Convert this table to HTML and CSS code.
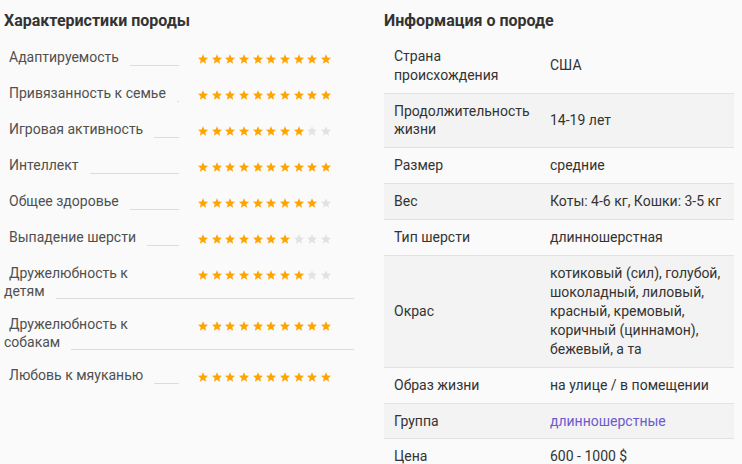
FILE: index.html
```html
<!DOCTYPE html>
<html lang="ru">
<head>
<meta charset="utf-8">
<title>Порода</title>
<link rel="stylesheet" href="styles.css">
</head>
<body>
<svg class="defs" width="0" height="0" aria-hidden="true">
  <symbol id="star" viewBox="2 2 20 19.4">
    <polygon points="12,2 14.9,8.6 22,9.3 16.6,14 18.2,21 12,17.3 5.8,21 7.4,14 2,9.3 9.1,8.6"/>
  </symbol>
</svg>
<div class="page">
  <section class="col">
    <h2 class="title">Характеристики породы</h2>
    <div class="traits">
      <div class="trait">
        <div class="label"><span class="name">Адаптируемость</span><i class="leader"></i></div>
        <div class="stars" data-v="10"></div>
      </div>
      <div class="trait">
        <div class="label"><span class="name">Привязанность к семье</span><i class="leader"></i></div>
        <div class="stars" data-v="10"></div>
      </div>
      <div class="trait">
        <div class="label"><span class="name">Игровая активность</span><i class="leader"></i></div>
        <div class="stars" data-v="8"></div>
      </div>
      <div class="trait">
        <div class="label"><span class="name">Интеллект</span><i class="leader"></i></div>
        <div class="stars" data-v="10"></div>
      </div>
      <div class="trait">
        <div class="label"><span class="name">Общее здоровье</span><i class="leader"></i></div>
        <div class="stars" data-v="9"></div>
      </div>
      <div class="trait">
        <div class="label"><span class="name">Выпадение шерсти</span><i class="leader"></i></div>
        <div class="stars" data-v="7"></div>
      </div>
      <div class="trait wrapped">
        <div class="label"><span class="name">Дружелюбность к</span></div>
        <div class="stars" data-v="8"></div>
        <div class="label cont"><span class="name">детям</span><i class="leader"></i></div>
      </div>
      <div class="trait wrapped">
        <div class="label"><span class="name">Дружелюбность к</span></div>
        <div class="stars" data-v="10"></div>
        <div class="label cont"><span class="name">собакам</span><i class="leader"></i></div>
      </div>
      <div class="trait">
        <div class="label"><span class="name">Любовь к мяуканью</span><i class="leader"></i></div>
        <div class="stars" data-v="10"></div>
      </div>
    </div>
  </section>
  <section class="col">
    <h2 class="title">Информация о породе</h2>
    <table class="info">
      <tr><td class="k">Страна происхождения</td><td class="v">США</td></tr>
      <tr><td class="k">Продолжительность жизни</td><td class="v">14-19 лет</td></tr>
      <tr><td class="k">Размер</td><td class="v">средние</td></tr>
      <tr><td class="k">Вес</td><td class="v">Коты: 4-6 кг, Кошки: 3-5 кг</td></tr>
      <tr><td class="k">Тип шерсти</td><td class="v">длинношерстная</td></tr>
      <tr><td class="k">Окрас</td><td class="v">котиковый (сил), голубой, шоколадный, лиловый, красный, кремовый, коричный (циннамон), бежевый, а та</td></tr>
      <tr><td class="k">Образ жизни</td><td class="v">на улице / в помещении</td></tr>
      <tr><td class="k">Группа</td><td class="v"><a class="link" href="#">длинношерстные</a></td></tr>
      <tr><td class="k">Цена</td><td class="v">600 - 1000 $</td></tr>
    </table>
  </section>
</div>
<script>
document.querySelectorAll('.stars').forEach(function (el) {
  var v = +el.dataset.v, html = '';
  for (var i = 0; i < 10; i++) {
    html += '<svg class="star ' + (i < v ? 'on' : 'off') + '"><use href="#star"/></svg>';
  }
  el.innerHTML = html;
});
</script>
</body>
</html>
```
FILE: styles.css
```css
html, body {
  margin: 0;
  padding: 0;
  background: #fafafa;
}
body {
  font-family: Roboto, "Liberation Sans", Arial, sans-serif;
  font-size: 14px;
  color: #333;
}
.defs {
  position: absolute;
  width: 0;
  height: 0;
  overflow: hidden;
}
.page {
  display: grid;
  grid-template-columns: 350px 350px;
  column-gap: 30px;
  padding: 12px 0 0 4px;
}
.title {
  margin: 0 0 8px;
  font-size: 16px;
  font-weight: 700;
  line-height: 18.75px;
  color: #333;
}
/* traits */
.trait {
  display: grid;
  grid-template-columns: 175px 1fr;
  column-gap: 19px;
  padding: 10px 0 10px;
}
.trait.wrapped {
  padding-bottom: 8px;
}
.label {
  display: flex;
  line-height: 16px;
  color: #505050;
  padding-left: 5px;
}
.label.cont {
  grid-column: 1 / -1;
  padding-left: 0;
  line-height: 13px;
  padding-top: 4px;
}
.name {
  white-space: nowrap;
}
.leader {
  flex: 1;
  margin: 0 0 -1px 11px;
  border-bottom: 1px solid #dcdcdc;
}
.stars {
  display: flex;
  gap: 3.67px;
  padding-top: 5px;
  height: 10px;
}
.star {
  width: 10px;
  height: 10px;
  display: block;
}
.star.on { fill: #ffa500; }
.star.off { fill: #e2e2e4; }
/* table */
.info {
  width: 350px;
  border-collapse: collapse;
}
.info td {
  padding: 8px 10px;
  line-height: 18.9px;
  vertical-align: middle;
  border-bottom: 1px solid #e2e2e2;
  color: #333;
}
.info td.k {
  width: 136px;
}
.info tr:nth-child(even) td {
  background: #f3f3f3;
}
.link {
  color: #6a5acd;
  text-decoration: none;
}
```
